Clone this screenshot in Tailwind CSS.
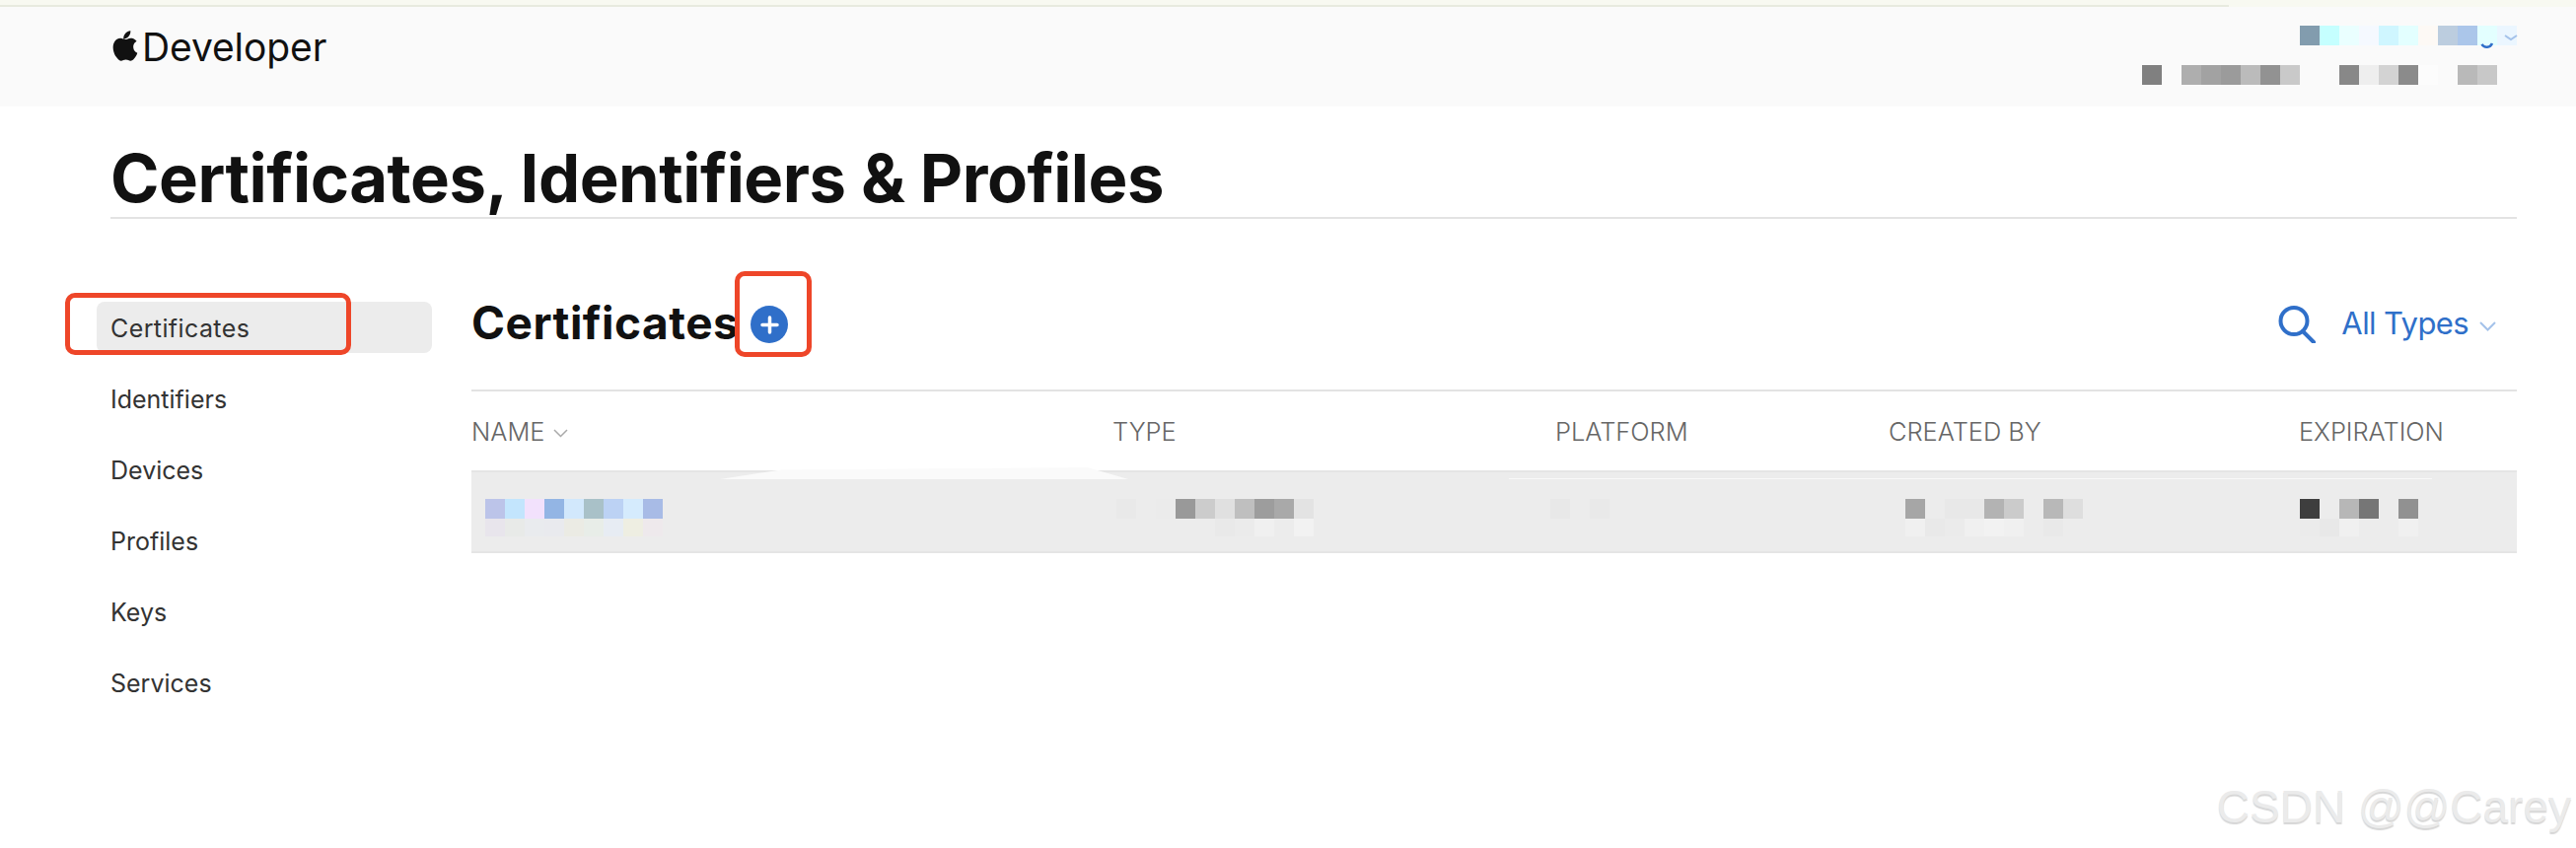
<!DOCTYPE html>
<html><head><meta charset="utf-8"><script src="https://cdn.jsdelivr.net/npm/@tailwindcss/browser@4"></script></head>
<body class="bg-white">
<div class="relative w-[2612px] h-[860px] overflow-hidden font-['Inter',sans-serif] text-[#111]">
  <div class="h-[7px] bg-[#f8f9f1]"><div class="h-[5px]"></div><div class="w-[2260px] h-[2px] bg-[#e8eadf]"></div></div>
  <header class="relative h-[101px] bg-[#fafafa] flex justify-between pl-[113px]">
    <div class="flex items-start pt-[18px]">
      <svg class="w-[28px] h-[33px] mt-[5px]" viewBox="0 0 24 28" fill="#111"><path d="M16.6 1c.1 2-.6 3.600-1.700 4.800-1.100 1.300-2.800 2.200-4.400 2.100-.2-1.800.6-3.600 1.700-4.800C13.400 1.800 15.200.9 16.600 1zM21.900 9.900c-.2.100-2.900 1.700-2.900 5 0 3.900 3.400 5.300 3.500 5.300 0 .1-.5 1.900-1.800 3.700-1.100 1.600-2.200 3.100-4 3.100-1.700 0-2.200-1-4.200-1-1.900 0-2.600 1-4.100 1-1.800.1-3.100-1.700-4.200-3.300-2.300-3.200-4-9-1.700-13 1.100-2 3.200-3.200 5.400-3.300 1.700 0 3.300 1.100 4.300 1.100s2.900-1.400 4.900-1.200c.8 0 3.200.3 4.800 2.600z"/></svg>
      <span class="text-[39px] leading-[46px] tracking-[-0.1px] font-normal ml-[3px]">Developer</span>
    </div>
    <div class="w-[300px] mr-[60px] pt-[19px] flex flex-col items-end">
      <div class="flex">
        <i class="w-5 h-5 bg-[#829cae]"></i><i class="w-5 h-5 bg-[#c5ffff]"></i><i class="w-5 h-5 bg-[#eaffff]"></i><i class="w-5 h-5 bg-[#f5f9ff]"></i><i class="w-5 h-5 bg-[#cff6ff]"></i><i class="w-5 h-5 bg-[#e3ffff]"></i><i class="w-5 h-5 bg-[#fdf9f5]"></i><i class="w-5 h-5 bg-[#bccddf]"></i><i class="w-5 h-5 bg-[#abc6ea]"></i><i class="w-5 h-5 bg-[#e3ffff]"></i><i class="w-5 h-5 bg-[#ebf6ff]"></i>
      </div>
      <div class="flex w-[360px] shrink-0 mt-[20px] mr-[20px]">
        <i class="w-5 h-5 bg-[#808080]"></i><i class="w-5 h-5"></i><i class="w-5 h-5 bg-[#aeaeae]"></i><i class="w-5 h-5 bg-[#a2a2a2]"></i><i class="w-5 h-5 bg-[#9b9b9b]"></i><i class="w-5 h-5 bg-[#bbbbbb]"></i><i class="w-5 h-5 bg-[#929292]"></i><i class="w-5 h-5 bg-[#c9c9c9]"></i><i class="w-5 h-5"></i><i class="w-5 h-5"></i><i class="w-5 h-5 bg-[#888888]"></i><i class="w-5 h-5 bg-[#eeeeee]"></i><i class="w-5 h-5 bg-[#d3d3d3]"></i><i class="w-5 h-5 bg-[#8b8b8b]"></i><i class="w-5 h-5 bg-[#fcfcfc]"></i><i class="w-5 h-5"></i><i class="w-5 h-5 bg-[#b9b9b9]"></i><i class="w-5 h-5 bg-[#c8c8c8]"></i>
      </div>
    </div>
    <svg class="absolute left-[2514px] top-[27px] w-[40px] h-[16px]" viewBox="0 0 40 16" fill="none"><path d="M2 10c2 5 9 5 11 0" stroke="#2f6fc9" stroke-width="2.500" stroke-dasharray="0 1 14"/><path d="M26 2l6 4 6-4" stroke="#a4c2ea" stroke-width="2"/></svg>
  </header>
  <div class="pl-[112px] pr-[60px]">
    <h1 class="h-[114px] pt-[35px] text-[67px] leading-[76px] font-bold tracking-[-0.5px] border-b-2 border-[#e3e3e3] text-[#111]">Certificates, Identifiers &amp; Profiles</h1>
  </div>
  <div class="flex pl-[98px] pr-[60px]">
    <nav class="w-[340px] shrink-0 pt-[84px] text-[25px] text-[#333]">
      <div class="h-[52px] bg-[#ececec] rounded-[8px] pl-[14px] pt-[1px] leading-[52px] tracking-[0.4px]">Certificates</div>
      <div class="pl-[14px] h-[72px] leading-[72px] mt-[11px]">Identifiers</div>
      <div class="pl-[14px] h-[72px] leading-[72px]">Devices</div>
      <div class="pl-[14px] h-[72px] leading-[72px]">Profiles</div>
      <div class="pl-[14px] h-[72px] leading-[72px]">Keys</div>
      <div class="pl-[14px] h-[72px] leading-[72px]">Services</div>
    </nav>
    <main class="ml-[40px] flex-1">
      <div class="h-[175px] pt-[76px] border-b-2 border-[#e3e3e3] flex items-start justify-between">
        <div class="flex items-center h-[58px]">
          <h2 class="text-[46px] leading-[58px] font-bold tracking-[0.5px] text-[#111]">Certificates</h2>
          <span class="ml-[12px] mt-[4px] w-[38px] h-[38px] rounded-full bg-[#2f6fc9] flex items-center justify-center">
            <svg class="w-[19px] h-[19px]" viewBox="0 0 19 19" stroke="#fff" stroke-width="3.500" stroke-linecap="round"><path d="M9.500 2v15M2 9.500h15"/></svg>
          </span>
        </div>
        <div class="flex items-center h-[58px] text-[#2f6fc9] pt-[4px] pr-[21px]">
          <svg class="w-[38px] h-[38px]" viewBox="0 0 38 38" fill="none" stroke="#2f6fc9" stroke-width="4" stroke-linecap="round"><circle cx="16" cy="15.500" r="13.500"/><path d="M25 26l11 11"/></svg>
          <span class="ml-[26px] -mt-[3px] text-[31px] leading-[40px] tracking-[-0.6px]">All Types</span>
          <svg class="ml-[11px] w-[17px] h-[10px] mt-[3px]" viewBox="0 0 17 10" fill="none" stroke="#a4c2ea" stroke-width="2"><path d="M1 1l7.500 7.500L16 1"/></svg>
        </div>
      </div>
      <div class="grid grid-cols-[650px_449px_338px_416px_1fr] h-[80px] pt-[2px] items-center text-[25.400px] text-[#666] font-light">
        <div class="flex items-center">NAME<svg class="ml-[9px] w-[15px] h-[9px] mt-[4px]" viewBox="0 0 15 9" fill="none" stroke="#aaa" stroke-width="1.500"><path d="M1 1l6.500 6.500L14 1"/></svg></div>
        <div>TYPE</div><div>PLATFORM</div><div>CREATED BY</div><div>EXPIRATION</div>
      </div>
      <div class="relative h-[84px] bg-[#ececec] border-y-2 border-[#e5e5e5]">
        <div class="flex pt-[27px] pl-[14px]">
          <i class="w-5 h-5 bg-[#bcc4e9]"></i><i class="w-5 h-5 bg-[#c3e5fd]"></i><i class="w-5 h-5 bg-[#f2e1fc]"></i><i class="w-5 h-5 bg-[#93b5e4]"></i><i class="w-5 h-5 bg-[#d2e8fc]"></i><i class="w-5 h-5 bg-[#a9c1c8]"></i><i class="w-5 h-5 bg-[#bcd2f4]"></i><i class="w-5 h-5 bg-[#d5ebfd]"></i><i class="w-5 h-5 bg-[#a8bbe6]"></i>
          <i class="w-5 h-5 ml-[460px] bg-[#e9e9e9]"></i><i class="w-5 h-5 bg-[#ececec]"></i><i class="w-5 h-5 bg-[#ebebeb]"></i><i class="w-5 h-5 bg-[#999999]"></i><i class="w-5 h-5 bg-[#cccccc]"></i><i class="w-5 h-5 bg-[#e0e0e0]"></i><i class="w-5 h-5 bg-[#bfbfbf]"></i><i class="w-5 h-5 bg-[#9d9d9d]"></i><i class="w-5 h-5 bg-[#a9a9a9]"></i><i class="w-5 h-5 bg-[#e3e3e3]"></i>
          <i class="w-5 h-5 ml-[240px] bg-[#e8e8e8]"></i><i class="w-5 h-5"></i><i class="w-5 h-5 bg-[#e9e9e9]"></i>
          <i class="w-5 h-5 ml-[300px] bg-[#a6a6a6]"></i><i class="w-5 h-5"></i><i class="w-5 h-5 bg-[#e8e8e8]"></i><i class="w-5 h-5 bg-[#e8e8e8]"></i><i class="w-5 h-5 bg-[#b3b3b3]"></i><i class="w-5 h-5 bg-[#cbcbcb]"></i><i class="w-5 h-5"></i><i class="w-5 h-5 bg-[#b8b8b8]"></i><i class="w-5 h-5 bg-[#dedede]"></i>
          <i class="w-5 h-5 ml-[220px] bg-[#3e3e3e]"></i><i class="w-5 h-5"></i><i class="w-5 h-5 bg-[#b7b7b7]"></i><i class="w-5 h-5 bg-[#767676]"></i><i class="w-5 h-5"></i><i class="w-5 h-5 bg-[#919191]"></i>
        </div>
        <div class="flex pl-[14px]">
          <i class="w-5 h-[18px] bg-[#e8e5ec]"></i><i class="w-5 h-[18px] bg-[#e8eae8]"></i><i class="w-5 h-[18px] bg-[#e9ebee]"></i><i class="w-5 h-[18px] bg-[#e9eaee]"></i><i class="w-5 h-[18px] bg-[#ebebe4]"></i><i class="w-5 h-[18px] bg-[#e8ede8]"></i><i class="w-5 h-[18px] bg-[#e7ecf3]"></i><i class="w-5 h-[18px] bg-[#eeeee2]"></i><i class="w-5 h-[18px] bg-[#eee9ec]"></i>
          <i class="w-5 h-[18px] ml-[560px] bg-[#e9e9e9]"></i><i class="w-5 h-[18px] bg-[#ebebeb]"></i><i class="w-5 h-[18px] bg-[#f0f0f0]"></i><i class="w-5 h-[18px]"></i><i class="w-5 h-[18px] bg-[#f2f2f2]"></i>
          <i class="w-5 h-[18px] ml-[600px] bg-[#f0f0f0]"></i><i class="w-5 h-[18px] bg-[#e9e9e9]"></i><i class="w-5 h-[18px] bg-[#ebebeb]"></i><i class="w-5 h-[18px] bg-[#f0f0f0]"></i><i class="w-5 h-[18px] bg-[#f2f2f2]"></i><i class="w-5 h-[18px] bg-[#f0f0f0]"></i><i class="w-5 h-[18px]"></i><i class="w-5 h-[18px] bg-[#e9e9e9]"></i>
          <i class="w-5 h-[18px] ml-[240px] bg-[#ebebeb]"></i><i class="w-5 h-[18px] bg-[#e8e8e8]"></i><i class="w-5 h-[18px] bg-[#f0f0f0]"></i><i class="w-5 h-[18px]"></i><i class="w-5 h-[18px]"></i><i class="w-5 h-[18px] bg-[#f0f0f0]"></i>
        </div>
      </div>
    </main>
  </div>
  <div class="absolute left-[730px] top-[474px] w-[414px] h-[12px] bg-[#fafafa] [clip-path:polygon(0_100%,15%_20%,90%_0,100%_100%)]"></div>
  <div class="absolute left-[1530px] top-[485px] w-[936px] h-[1px] bg-[#f8f8f8]"></div>
  <div class="absolute left-[66px] top-[297px] w-[290px] h-[63px] border-[5px] border-[#ee4629] rounded-[10px]"></div>
  <div class="absolute left-[745px] top-[275px] w-[78px] h-[87px] border-[5px] border-[#ee4629] rounded-[10px]"></div>
  <div class="absolute right-[5px] top-[788px] text-[46px] leading-[60px] font-['Liberation_Sans',sans-serif] text-[#ebebeb] [text-shadow:0_2px_1px_#d6d6d6]">CSDN @@Carey</div>
</div>
</body></html>
